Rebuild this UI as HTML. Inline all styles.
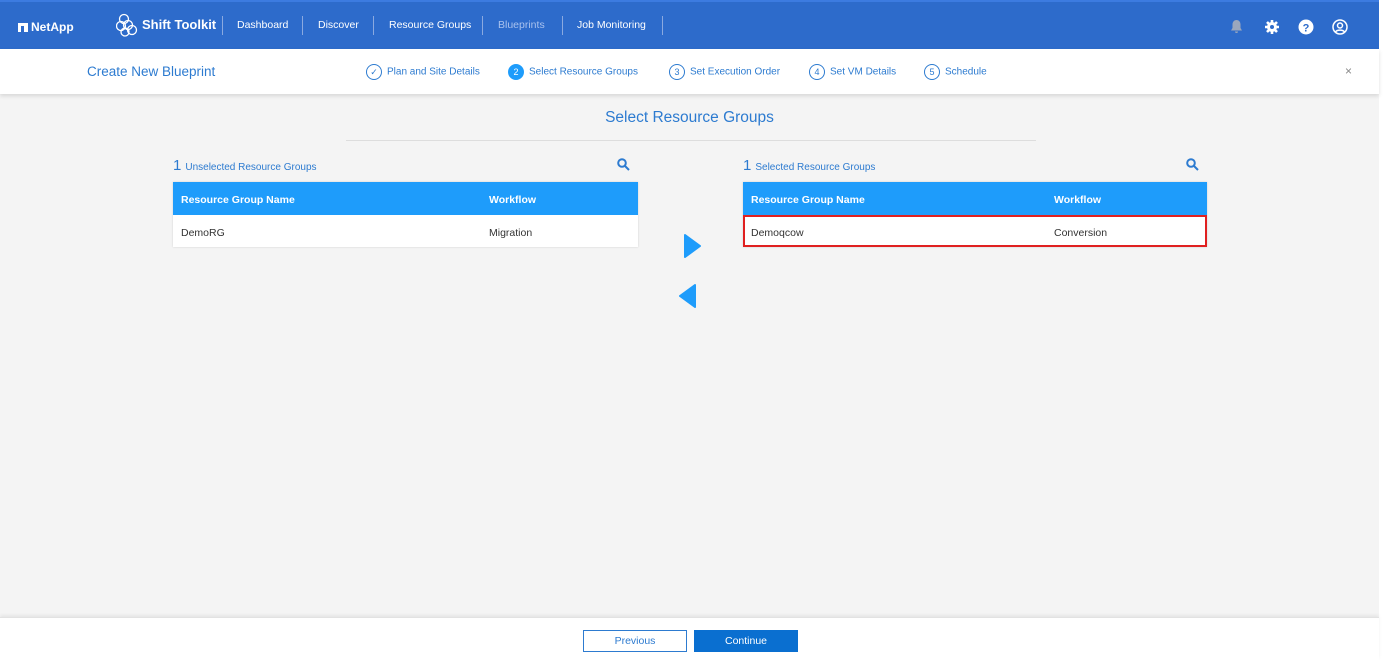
<!DOCTYPE html>
<html><head><meta charset="utf-8"><style>
*{box-sizing:border-box;margin:0;padding:0}
body{width:1384px;height:660px;background:#fff;font-family:"Liberation Sans",sans-serif;position:relative;overflow:hidden}
.wrap{position:absolute;left:0;top:0;width:1379px;height:660px;background:#f4f4f4}
.hdr{position:absolute;left:0;top:0;width:1379px;height:49px;background:#2d6bcb;color:#fff;border-top:2px solid #3c7be0}
.hdr .t{position:absolute;top:17px;font-size:10.5px;color:#fff}
.sep{position:absolute;top:14px;width:1px;height:19px;background:#8aa9e0}
.sub{position:absolute;left:0;top:49px;width:1379px;height:45px;background:#fff;box-shadow:0 2px 4px rgba(0,0,0,.12)}
.step{position:absolute;top:15px;font-size:10px;color:#2d7bd0}
.circ{display:inline-block;width:16px;height:16px;border:1.3px solid #2d7bd0;border-radius:50%;text-align:center;font-size:9px;line-height:14px;margin-right:5px;vertical-align:middle}
.title{position:absolute;top:109px;left:0;width:1379px;text-align:center;color:#2d7bd0;font-size:15.5px}
.hr{position:absolute;top:140px;left:346px;width:690px;height:1px;background:#ddd}
.cnt{position:absolute;top:157px;color:#2d7bd0;font-size:10px}
.cnt b{font-weight:normal;font-size:15px;margin-right:4px}
.tbl{position:absolute;top:182px;height:65px;background:#fff;box-shadow:0 0 2px rgba(0,0,0,.15)}
.th{height:33px;background:#1e9cfb;color:#fff;font-weight:bold;font-size:10.5px;position:relative}
.th span,.tr span{position:absolute;top:12px}
.tr{height:32px;position:relative;font-size:10.5px;color:#333}
.tr span{top:12px}
.foot{position:absolute;left:0;top:617px;width:1379px;height:43px;background:#fff;border-top:1px solid #e2e2e2;box-shadow:0 -2px 3px rgba(0,0,0,.06)}
.btn{position:absolute;top:12px;width:104px;height:22px;font-size:10.5px;text-align:center;line-height:20px}
</style></head><body><div class="wrap">
<div class="hdr">
 <div style="position:absolute;left:18px;top:21px;width:10px;height:9px;background:#fff"></div>
 <div style="position:absolute;left:21px;top:24px;width:3px;height:6px;background:#2d6bcb"></div>
 <div class="t" style="left:31px;font-weight:bold;font-size:12px;top:18px">NetApp</div>
 <svg style="position:absolute;left:116px;top:11px" width="22" height="24" viewBox="0 0 22 24" fill="none" stroke="#fff" stroke-width="1.3"><circle cx="8" cy="6" r="4.5"/><circle cx="5" cy="13" r="4.5"/><circle cx="12" cy="12" r="4.5"/><circle cx="16" cy="17" r="4.5"/><circle cx="9" cy="19" r="4"/></svg>
 <div class="t" style="left:142px;font-weight:bold;font-size:13px;top:15px">Shift Toolkit</div>
 <div class="sep" style="left:222px"></div>
 <div class="t" style="left:237px">Dashboard</div>
 <div class="sep" style="left:302px"></div>
 <div class="t" style="left:318px">Discover</div>
 <div class="sep" style="left:373px"></div>
 <div class="t" style="left:389px">Resource Groups</div>
 <div class="sep" style="left:482px"></div>
 <div class="t" style="left:498px;color:#a9c2ee">Blueprints</div>
 <div class="sep" style="left:562px"></div>
 <div class="t" style="left:577px">Job Monitoring</div>
 <div class="sep" style="left:662px"></div>
 <svg style="position:absolute;left:1230px;top:17px" width="13" height="15" viewBox="0 0 13 15"><path d="M6.5 1C4 1 2.5 3 2.5 5.5V9L1 11.5H12L10.5 9V5.5C10.5 3 9 1 6.5 1ZM5 12.5a1.5 1.5 0 0 0 3 0Z" fill="#9aa7bd"/></svg>
 <svg style="position:absolute;left:1264px;top:17px" width="16" height="16" viewBox="0 0 16 16"><circle cx="8" cy="8" r="5" fill="#fff"/><g stroke="#fff" stroke-width="2.6"><path d="M8 1v14M1 8h14M3 3l10 10M13 3L3 13"/></g><circle cx="8" cy="8" r="2" fill="#2d6bcb"/></svg>
 <svg style="position:absolute;left:1298px;top:17px" width="16" height="16" viewBox="0 0 16 16"><circle cx="8" cy="8" r="7.5" fill="#fff"/><text x="8" y="12.5" text-anchor="middle" font-size="11" font-weight="bold" fill="#2d6bcb" font-family="Liberation Sans">?</text></svg>
 <svg style="position:absolute;left:1332px;top:17px" width="16" height="16" viewBox="0 0 16 16" fill="none" stroke="#fff" stroke-width="1.5"><circle cx="8" cy="8" r="7"/><circle cx="8" cy="6.5" r="2.5"/><path d="M3.5 13c1.5-2.5 7.5-2.5 9 0"/></svg>
</div>
<div class="sub">
 <div style="position:absolute;left:87px;top:15px;font-size:13.5px;color:#2d7bd0">Create New Blueprint</div>
 <div class="step" style="left:366px"><span class="circ">✓</span>Plan and Site Details</div>
 <div class="step" style="left:508px"><span class="circ" style="background:#1e9cfb;border-color:#1e9cfb;color:#fff">2</span>Select Resource Groups</div>
 <div class="step" style="left:669px"><span class="circ">3</span>Set Execution Order</div>
 <div class="step" style="left:809px"><span class="circ">4</span>Set VM Details</div>
 <div class="step" style="left:924px"><span class="circ">5</span>Schedule</div>
 <div style="position:absolute;left:1345px;top:15px;font-size:12px;color:#888">×</div>
</div>
<div class="title">Select Resource Groups</div>
<div class="hr"></div>
<div class="cnt" style="left:173px"><b>1</b>Unselected Resource Groups</div>
<div class="cnt" style="left:743px"><b>1</b>Selected Resource Groups</div>
<svg style="position:absolute;left:617px;top:158px" width="13" height="13" viewBox="0 0 13 13" fill="none" stroke="#2d7bd0" stroke-width="2"><circle cx="5" cy="5" r="3.8"/><path d="M8 8l4 4"/></svg>
<svg style="position:absolute;left:1186px;top:158px" width="13" height="13" viewBox="0 0 13 13" fill="none" stroke="#2d7bd0" stroke-width="2"><circle cx="5" cy="5" r="3.8"/><path d="M8 8l4 4"/></svg>
<div class="tbl" style="left:173px;width:465px">
 <div class="th"><span style="left:8px">Resource Group Name</span><span style="left:316px">Workflow</span></div>
 <div class="tr"><span style="left:8px">DemoRG</span><span style="left:316px">Migration</span></div>
</div>
<div class="tbl" style="left:743px;width:464px">
 <div class="th"><span style="left:8px">Resource Group Name</span><span style="left:311px">Workflow</span></div>
 <div class="tr" style="border:2px solid #e02020"><span style="left:6px;top:10px">Demoqcow</span><span style="left:309px;top:10px">Conversion</span></div>
</div>
<svg style="position:absolute;left:683px;top:233px" width="18" height="26" viewBox="0 0 18 26"><path d="M2 2L17 13L2 24Z" fill="#1e9cfb" stroke="#1e9cfb" stroke-width="2" stroke-linejoin="round"/></svg>
<svg style="position:absolute;left:679px;top:283px" width="18" height="26" viewBox="0 0 18 26"><path d="M16 2L1 13L16 24Z" fill="#1e9cfb" stroke="#1e9cfb" stroke-width="2" stroke-linejoin="round"/></svg>
<div class="foot">
 <div class="btn" style="left:583px;border:1px solid #2d7bd0;color:#2d7bd0;background:#fff">Previous</div>
 <div class="btn" style="left:694px;background:#0a6fd0;color:#fff;border:1px solid #0a6fd0">Continue</div>
</div>
</div></body></html>
